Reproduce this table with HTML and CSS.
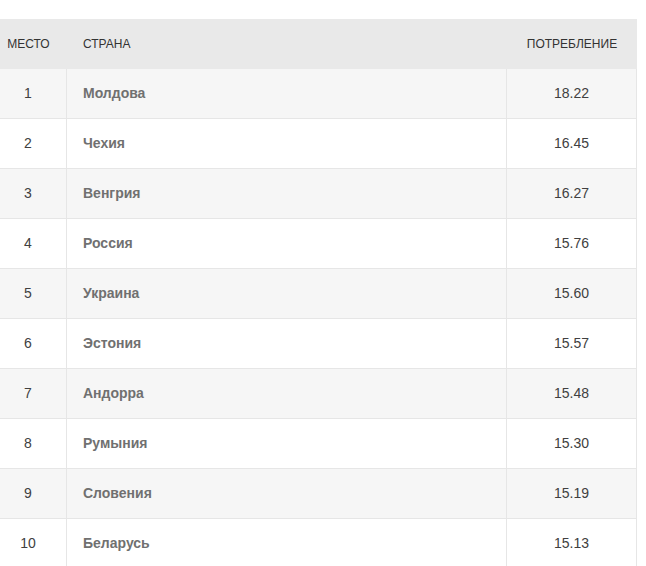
FILE: index.html
```html
<!DOCTYPE html>
<html lang="ru">
<head>
<meta charset="utf-8">
<link rel="stylesheet" href="styles.css">
</head>
<body>
<table class="rank">
  <thead>
    <tr>
      <th class="c-place">Место</th>
      <th class="c-country">Страна</th>
      <th class="c-value">Потребление</th>
    </tr>
  </thead>
  <tbody>
    <tr><td class="c-place">1</td><td class="c-country">Молдова</td><td class="c-value">18.22</td></tr>
    <tr><td class="c-place">2</td><td class="c-country">Чехия</td><td class="c-value">16.45</td></tr>
    <tr><td class="c-place">3</td><td class="c-country">Венгрия</td><td class="c-value">16.27</td></tr>
    <tr><td class="c-place">4</td><td class="c-country">Россия</td><td class="c-value">15.76</td></tr>
    <tr><td class="c-place">5</td><td class="c-country">Украина</td><td class="c-value">15.60</td></tr>
    <tr><td class="c-place">6</td><td class="c-country">Эстония</td><td class="c-value">15.57</td></tr>
    <tr><td class="c-place">7</td><td class="c-country">Андорра</td><td class="c-value">15.48</td></tr>
    <tr><td class="c-place">8</td><td class="c-country">Румыния</td><td class="c-value">15.30</td></tr>
    <tr><td class="c-place">9</td><td class="c-country">Словения</td><td class="c-value">15.19</td></tr>
    <tr><td class="c-place">10</td><td class="c-country">Беларусь</td><td class="c-value">15.13</td></tr>
  </tbody>
</table>
</body>
</html>
```
FILE: styles.css
```css
html, body {
  margin: 0;
  padding: 0;
  background: #ffffff;
}
body {
  font-family: "Liberation Sans", Arial, sans-serif;
  color: #333333;
}
.rank {
  margin-top: 19px;
  border-collapse: separate;
  border-spacing: 0;
  table-layout: fixed;
  width: 637px;
}
.rank th,
.rank td {
  box-sizing: border-box;
  padding: 0;
  vertical-align: middle;
}
.rank th {
  height: 50px;
  background: #e9e9e9;
  font-size: 12px;
  font-weight: normal;
  text-transform: uppercase;
  color: #333333;
}
.rank td {
  height: 50px;
  padding-bottom: 2px;
  font-size: 14px;
  border-bottom: 1px solid #e6e6e6;
  color: #404040;
}
.rank tbody tr:nth-child(odd) td {
  background: #f6f6f6;
}
.rank tbody tr:nth-child(even) td {
  background: #ffffff;
}
.c-place {
  width: 67px;
  text-align: center;
  padding-right: 10px !important;
}
.c-country {
  width: 440px;
  text-align: left;
  padding-left: 16px !important;
}
.c-value {
  width: 130px;
  text-align: center;
}
.rank td.c-place,
.rank td.c-country,
.rank td.c-value {
  border-right: 1px solid #e6e6e6;
}
.rank td.c-country {
  font-weight: bold;
  color: #707070;
}
```
